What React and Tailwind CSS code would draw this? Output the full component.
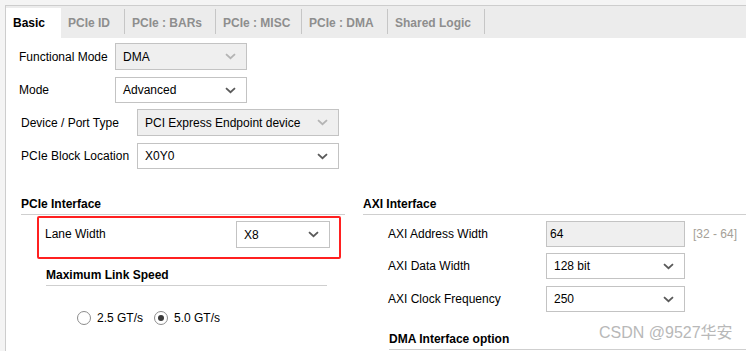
import React from 'react';

const Chevron = ({ muted }) => (
  <svg width="11" height="7" viewBox="0 0 11 7" className="shrink-0">
    <path d="M1 1.2 L5.5 5.2 L10 1.2" fill="none" stroke={muted ? '#b4b4b4' : '#5a5a5a'} strokeWidth="1.8" />
  </svg>
);

const Select = ({ value, width, height = 'h-[27px]', disabled }) => (
  <div className={`${width} ${height} flex items-center justify-between pl-[7px] pr-[10px] border border-[#c3c3c3] ${disabled ? 'bg-[#efefef]' : 'bg-white'}`}>
    <span>{value}</span>
    <Chevron muted={disabled} />
  </div>
);

const Header = ({ children, className = '' }) => (
  <div className={`font-bold leading-[14px] pb-[3px] border-b border-[#cfcfcf] ${className}`}>{children}</div>
);

const tabs = [
  { name: 'Basic', w: 'w-[55px]', active: true },
  { name: 'PCIe ID', w: 'w-[64px]' },
  { name: 'PCIe : BARs', w: 'w-[91px]' },
  { name: 'PCIe : MISC', w: 'w-[86px]' },
  { name: 'PCIe : DMA', w: 'w-[86px]' },
  { name: 'Shared Logic', w: 'w-[97px]' },
];

export default function App() {
  return (
    <div className="relative w-[746px] h-[351px] overflow-hidden bg-[#f4f4f4] pt-[5px] pl-[5px] text-[12px] text-black" style={{ fontFamily: '"Liberation Sans", Arial, sans-serif' }}>
      <div className="h-full border-l border-t border-[#cdcdcd] bg-white">
        {/* tab bar */}
        <div className="h-[32px] pt-[2px] bg-[#ececec] flex">
          {tabs.map((t) => (
            <div key={t.name} className={`${t.w} h-[30px] flex items-center justify-between font-bold pl-[7px] ${t.active ? 'bg-white text-black' : 'text-[#8e8e8e]'}`}>
              <span className="-mt-[1px]">{t.name}</span>
              {!t.active && <span className="w-px h-[25px] bg-[#c6c6c6] -mt-[4px]" />}
            </div>
          ))}
        </div>

        <div className="pl-[13px] pt-[5px]">
          <div className="flex items-center h-[27px]">
            <span className="w-[96px]">Functional Mode</span>
            <Select value="DMA" width="w-[132px]" disabled />
          </div>
          <div className="flex items-center h-[26px] mt-[7px]">
            <span className="w-[96px]">Mode</span>
            <Select value="Advanced" width="w-[132px]" height="h-[26px]" />
          </div>
          <div className="flex items-center h-[27px] mt-[6px] pl-[2px]">
            <span className="w-[116px]">Device / Port Type</span>
            <Select value="PCI Express Endpoint device" width="w-[202px]" disabled />
          </div>
          <div className="flex items-center h-[26px] mt-[7px] pl-[2px]">
            <span className="w-[116px]">PCIe Block Location</span>
            <Select value="X0Y0" width="w-[202px]" height="h-[26px]" />
          </div>
        </div>

        <div className="flex pl-[15px] mt-[28px]">
          {/* left column */}
          <div className="w-[324px]">
            <Header>PCIe Interface</Header>
            <div className="ml-[16px] mt-[1px] w-[304px] h-[43px] border-2 border-[#ff2020] rounded-[2px] flex items-start pt-[3px] pl-[6px]">
              <span className="w-[191px] mt-[4px]">Lane Width</span>
              <Select value="X8" width="w-[94px]" />
            </div>
            <Header className="ml-[25px] mt-[9px] w-[281px]">Maximum Link Speed</Header>
            <div className="flex items-center ml-[56px] mt-[25px] h-[14px]">
              <span className="w-[14px] h-[14px] rounded-full border border-[#8c8c8c] bg-white" />
              <span className="ml-[6px]">2.5 GT/s</span>
              <span className="ml-[11px] w-[14px] h-[14px] rounded-full border border-[#8c8c8c] bg-white flex items-center justify-center">
                <span className="w-[6px] h-[6px] rounded-full bg-[#3a3a3a]" />
              </span>
              <span className="ml-[6px]">5.0 GT/s</span>
            </div>
            <div className="ml-[215px] mt-[26px] w-[94px] h-[27px] border border-[#c3c3c3]" />
          </div>

          {/* right column */}
          <div className="flex-1 ml-[18px]">
            <Header>AXI Interface</Header>
            <div className="pl-[25px]">
              <div className="flex items-center h-[26px] mt-[6px]">
                <span className="w-[158px]">AXI Address Width</span>
                <div className="w-[139px] h-[26px] flex items-center pl-[3px] bg-[#efefef] border border-[#c3c3c3]">64</div>
                <span className="ml-[8px] text-[#a59f98]">[32 - 64]</span>
              </div>
              <div className="flex items-center h-[26px] mt-[6px]">
                <span className="w-[158px]">AXI Data Width</span>
                <Select value="128 bit" width="w-[139px]" height="h-[26px]" />
              </div>
              <div className="flex items-center h-[26px] mt-[7px]">
                <span className="w-[158px]">AXI Clock Frequency</span>
                <Select value="250" width="w-[139px]" height="h-[26px]" />
              </div>
              <Header className="ml-[1px] mt-[20px]">DMA Interface option</Header>
            </div>
          </div>
        </div>
      </div>

      <div className="absolute left-[599px] top-[323px] whitespace-nowrap text-[16px] leading-[20px] text-[#b8b8b8]" style={{ fontFamily: '"Liberation Sans", "Noto Sans CJK SC", sans-serif' }}>
        CSDN @9527华安
      </div>
    </div>
  );
}
